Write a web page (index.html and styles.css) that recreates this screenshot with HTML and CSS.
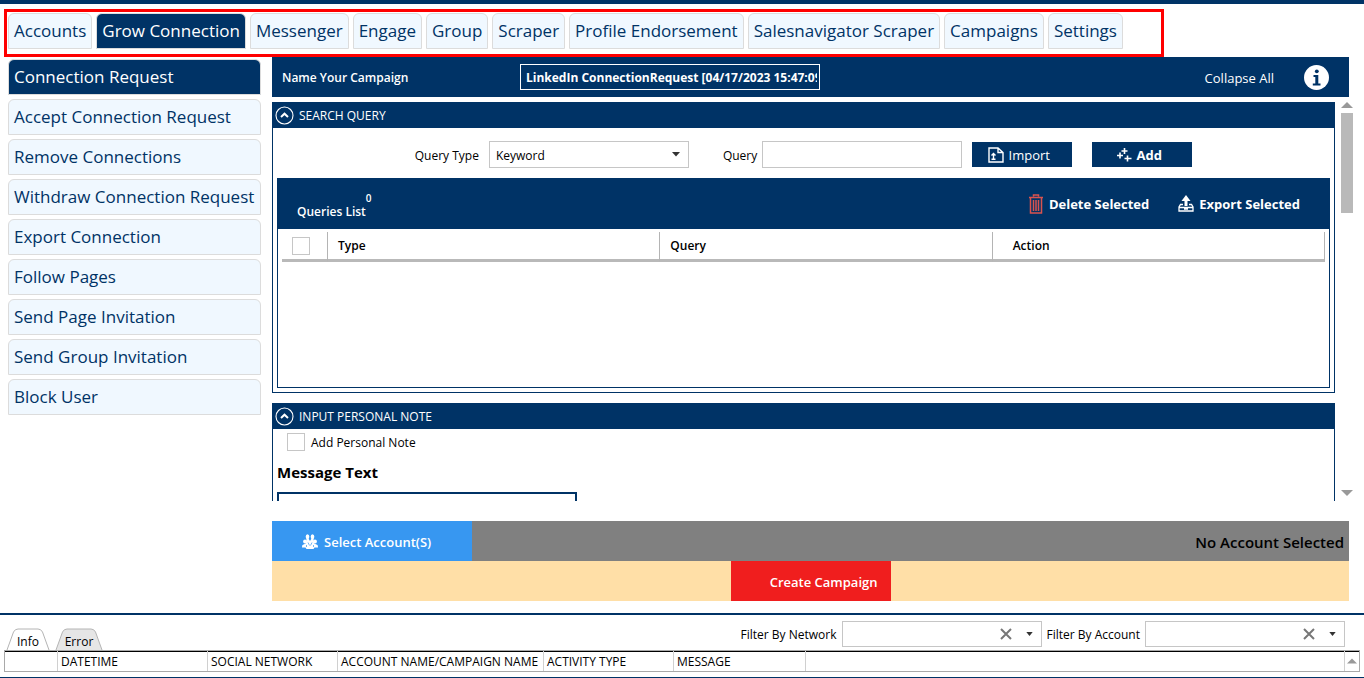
FILE: index.html
```html
<!DOCTYPE html>
<html lang="en">
<head>
<meta charset="utf-8">
<title>Grow Connection</title>
<link rel="stylesheet" href="styles.css">
</head>
<body>
<nav class="tabs" aria-label="Modules">
  <button class="tab">Accounts</button>
  <button class="tab active">Grow Connection</button>
  <button class="tab">Messenger</button>
  <button class="tab">Engage</button>
  <button class="tab">Group</button>
  <button class="tab">Scraper</button>
  <button class="tab">Profile Endorsement</button>
  <button class="tab">Salesnavigator Scraper</button>
  <button class="tab">Campaigns</button>
  <button class="tab">Settings</button>
</nav>

<div class="workspace">
  <nav class="side" aria-label="Grow Connection">
    <button class="tab active">Connection Request</button>
    <button class="tab">Accept Connection Request</button>
    <button class="tab">Remove Connections</button>
    <button class="tab">Withdraw Connection Request</button>
    <button class="tab">Export Connection</button>
    <button class="tab">Follow Pages</button>
    <button class="tab">Send Page Invitation</button>
    <button class="tab">Send Group Invitation</button>
    <button class="tab">Block User</button>
  </nav>

  <main class="main">
    <header class="campaign">
      <label class="campaign-label" for="campaign">Name Your Campaign</label>
      <input class="campaign-name" id="campaign" type="text" value="LinkedIn ConnectionRequest [04/17/2023 15:47:09]">
      <button class="plain collapse">Collapse All</button>
      <button class="plain info" aria-label="Information">
        <svg width="25" height="25" viewBox="0 0 25 25"><circle cx="12.500" cy="12.500" r="12.500" fill="#fff"/><circle cx="12.800" cy="6.300" r="1.900" fill="#003366"/><path d="M9.500 10h4.800v8.500h2.200v2H8.800v-2h2.500V12H9.500z" fill="#003366"/></svg>
      </button>
    </header>

    <div class="scroller">
      <div class="sections">
        <section class="section">
          <h2 class="section-head">
            <svg width="19" height="19" viewBox="0 0 19 19" fill="none" stroke="#fff"><circle cx="9.500" cy="9.500" r="8.500" stroke-width="1.100"/><path d="M6 11l3.500-3.300L13 11" stroke-width="2"/></svg>
            <span class="section-name">SEARCH QUERY</span>
          </h2>
          <div class="query-form">
            <label class="form-label" for="qtype">Query Type</label>
            <div class="pick type-pick">
              <select class="field" id="qtype"><option>Keyword</option></select>
              <svg class="arrow" width="8" height="5" viewBox="0 0 8 5"><path d="M0 0h8L4 4.500z" fill="#333"/></svg>
            </div>
            <label class="form-label" for="query">Query</label>
            <input class="field query-input" id="query" type="text">
            <button class="action">
              <svg width="16" height="16" viewBox="0 0 16 16" fill="none" stroke="#fff" stroke-width="1.400"><path d="M1 1h9l5 4.500V15H1zM10 1v4.500h5"/><path d="M5.500 12V6.500M3.500 8.500l2-2 2 2M3.500 12.300h4"/></svg>
              Import
            </button>
            <button class="action strong">
              <svg width="16" height="16" viewBox="0 0 16 16" fill="none" stroke="#fff" stroke-width="1.600"><path d="M8.500 1v6M5.500 4h6M4 5.500v6M1 8.500h6M11.500 8.500v6M8.500 11.500h7"/></svg>
              Add
            </button>
          </div>
          <div class="list">
            <div class="list-head">
              <h3 class="list-title">Queries List<span class="count">0</span></h3>
              <button class="plain list-action">
                <svg width="16" height="20" viewBox="0 0 16 20" fill="none" stroke="#d9534f" stroke-width="1.500"><path d="M1 3.500h14M5.500 2.500V1h5v1.500M2.500 4v15h11V4M5.500 6v11M8 6v11M10.500 6v11"/></svg>
                Delete Selected
              </button>
              <button class="plain list-action">
                <svg width="16" height="17" viewBox="0 0 16 17" fill="none" stroke="#fff" stroke-width="1.300"><path d="M5 9.500H2.500L1 12v4h14v-4l-1.500-2.500H11M1 12.500h14M6 14h4"/><path d="M3.500 6L8 0l4.500 6z" fill="#fff" stroke="none"/><path d="M6.500 5h3v6h-3z" fill="#fff" stroke="none"/></svg>
                Export Selected
              </button>
            </div>
            <table class="queries">
              <thead>
                <tr>
                  <th class="check-col"><input class="check" type="checkbox" aria-label="Select all queries"></th>
                  <th>Type</th>
                  <th>Query</th>
                  <th class="action-col">Action</th>
                </tr>
              </thead>
            </table>
          </div>
        </section>

        <section class="section">
          <h2 class="section-head">
            <svg width="19" height="19" viewBox="0 0 19 19" fill="none" stroke="#fff"><circle cx="9.500" cy="9.500" r="8.500" stroke-width="1.100"/><path d="M6 11l3.500-3.300L13 11" stroke-width="2"/></svg>
            <span class="section-name">INPUT PERSONAL NOTE</span>
          </h2>
          <div class="note">
            <div class="note-check"><input class="check" id="addnote" type="checkbox"><label class="form-label" for="addnote">Add Personal Note</label></div>
            <label class="note-title" for="message">Message Text</label>
            <textarea class="note-text" id="message"></textarea>
          </div>
        </section>
      </div>
      <div class="scrollbar" aria-hidden="true">
        <svg width="12" height="6" viewBox="0 0 12 6"><path d="M6 0l6 6H0z" fill="#999"/></svg>
        <div class="track"><div class="thumb"></div></div>
        <svg width="12" height="6" viewBox="0 0 12 6"><path d="M0 0h12L6 6z" fill="#999"/></svg>
      </div>
    </div>

    <div class="accounts">
      <button class="select-account">
        <svg width="16" height="16" viewBox="0 0 16 16" fill="#fff"><ellipse cx="5.500" cy="2.800" rx="1.800" ry="2.500"/><ellipse cx="10.500" cy="2.800" rx="1.800" ry="2.500"/><circle cx="3" cy="7.500" r="1.900"/><circle cx="13" cy="7.500" r="1.900"/><path d="M4.500 5h2.300L8 7l1.200-2h2.300l.7 4.500 3.300 1.500q.5.500.5 2.500h-3.500L11.500 15h-7l-1-1.500H0q0-2 .5-2.500l3.300-1.500z"/><path d="M6 8.500l1.500 3M10 8.500l-1.500 3M4.500 11v2M11.500 11v2" stroke="#3797f1" stroke-width=".7"/></svg>
        Select Account(S)
      </button>
      <span class="account-status">No Account Selected</span>
    </div>
    <div class="create-bar"><button class="create">Create Campaign</button></div>
  </main>
</div>

<footer class="log">
  <div class="log-bar">
    <div class="log-tabs">
      <button class="log-tab current">
        <svg class="log-shape" width="44" height="22" viewBox="0 0 44 22"><path d="M1 22L7.500 4Q9 1 12 1h20q3 0 4.500 3L43 22" fill="#fff" stroke="#b4b4b4"/></svg>
        <span class="log-name">Info</span>
      </button>
      <button class="log-tab">
        <svg class="log-shape" width="48" height="22" viewBox="0 0 48 22"><path d="M1 22L7.500 4Q9 1 12 1h24q3 0 4.500 3L47 22" fill="#e6e6e6" stroke="#b4b4b4"/></svg>
        <span class="log-name">Error</span>
      </button>
    </div>
    <div class="filters">
      <label class="form-label" for="fnet">Filter By Network</label>
      <div class="pick">
        <select class="field" id="fnet"><option></option></select>
        <button class="plain clear" aria-label="Clear network filter"><svg width="12" height="12" viewBox="0 0 12 12"><path d="M1 1l10 10M11 1L1 11" stroke="#777" stroke-width="2"/></svg></button>
        <svg class="arrow" width="7" height="4" viewBox="0 0 8 5"><path d="M0 0h8L4 5z" fill="#333"/></svg>
      </div>
      <label class="form-label" for="facc">Filter By Account</label>
      <div class="pick">
        <select class="field" id="facc"><option></option></select>
        <button class="plain clear" aria-label="Clear account filter"><svg width="12" height="12" viewBox="0 0 12 12"><path d="M1 1l10 10M11 1L1 11" stroke="#777" stroke-width="2"/></svg></button>
        <svg class="arrow" width="7" height="4" viewBox="0 0 8 5"><path d="M0 0h8L4 5z" fill="#333"/></svg>
      </div>
    </div>
  </div>
  <div class="log-frame">
    <table class="log-table">
      <thead>
        <tr>
          <th class="col-mark"></th>
          <th class="col-date">DATETIME</th>
          <th class="col-net">SOCIAL NETWORK</th>
          <th class="col-name">ACCOUNT NAME/CAMPAIGN NAME</th>
          <th class="col-net">ACTIVITY TYPE</th>
          <th class="col-msg">MESSAGE</th>
          <th></th>
        </tr>
      </thead>
    </table>
    <div class="log-scroll" aria-hidden="true"><svg width="10" height="6" viewBox="0 0 12 6"><path d="M6 0l6 6H0z" fill="#999"/></svg></div>
  </div>
</footer>
</body>
</html>
```

FILE: styles.css
```css
:root {
  --navy: #003366;
  --pale: #f0f8ff;
  --line: #c6c6c6;
}

* {
  box-sizing: border-box;
}

body {
  margin: 0;
  height: 100vh;
  display: flex;
  flex-direction: column;
  overflow: hidden;
  border-top: 4px solid var(--navy);
  border-bottom: 1px solid var(--navy);
  background: #fff;
  color: #000;
  font: 12px/16px "Open Sans", "Noto Sans", sans-serif;
}

button,
input,
select,
textarea {
  font: inherit;
  color: inherit;
  border-radius: 0;
  margin: 0;
}

svg {
  display: block;
  flex: none;
}

/* Module tabs */
.tabs {
  display: flex;
  gap: 4px;
  align-self: flex-start;
  margin: 5px 0 0 4px;
  padding: 1px 38px 5px 1px;
  border: 3px solid #f00;
}

.tab {
  height: 36px;
  padding: 0 5px;
  border: 1px solid #dcdcdc;
  border-radius: 6px 6px 0 0;
  background: var(--pale);
  color: var(--navy);
  font-size: 17px;
  line-height: 24px;
  text-align: left;
  white-space: nowrap;
}

.tab.active {
  background: var(--navy);
  color: #fff;
}

/* Workspace */
.workspace {
  flex: 1;
  min-height: 0;
  display: flex;
  gap: 11px;
  padding: 0 15px 12px 8px;
}

.side {
  width: 253px;
  flex: none;
  display: flex;
  flex-direction: column;
  gap: 4px;
  padding-top: 2px;
}

.main {
  flex: 1;
  min-width: 0;
  display: flex;
  flex-direction: column;
}

.plain {
  padding: 0;
  border: 0;
  background: none;
}

.campaign {
  height: 40px;
  flex: none;
  display: flex;
  align-items: center;
  padding: 0 20px 0 10px;
  background: var(--navy);
  color: #fff;
}

.campaign-label {
  width: 238px;
  padding-top: 2px;
  font-weight: 600;
}

.campaign-name {
  width: 300px;
  height: 26px;
  padding: 1px 2px 0 5px;
  border: 1px solid #fff;
  background: none;
  font-weight: 700;
}

.collapse {
  margin-left: auto;
  padding-top: 2px;
  font-size: 13px;
}

.info {
  margin-left: 30px;
}

/* Scrolling sections */
.scroller {
  flex: 1;
  min-height: 0;
  display: flex;
  gap: 6px;
  margin: 5px -4px 20px 0;
}

.sections {
  flex: 1;
  min-width: 0;
  overflow: hidden;
  display: flex;
  flex-direction: column;
  gap: 10px;
}

.section {
  flex: none;
  border: 1px solid var(--navy);
  border-top: 0;
}

.section-head {
  height: 26px;
  margin: 0;
  padding: 0 2px;
  display: flex;
  align-items: center;
  gap: 5px;
  background: var(--navy);
  color: #fff;
  font-size: 12px;
  font-weight: 400;
}

.section-name,
.form-label {
  padding-top: 2px;
}

.query-form {
  display: flex;
  align-items: center;
  justify-content: center;
  padding: 13px 0 10px;
}

.field {
  height: 27px;
  padding: 2px 6px 0;
  border: 1px solid var(--line);
  background: #fff;
  appearance: none;
}

.pick {
  position: relative;
  width: 200px;
}

.pick .field {
  display: block;
  width: 100%;
}

.arrow {
  position: absolute;
  top: 11px;
  right: 9px;
  pointer-events: none;
}

.type-pick {
  margin: 0 34px 0 10px;
}

.query-input {
  width: 200px;
  margin: 0 10px 0 5px;
}

.action {
  width: 100px;
  height: 25px;
  display: flex;
  align-items: center;
  justify-content: center;
  gap: 5px;
  padding: 0 7px 0 0;
  border: 0;
  background: var(--navy);
  color: #fff;
  font-size: 13px;
}

.action + .action {
  margin-left: 20px;
}

.strong {
  font-weight: 700;
}

.list {
  min-height: 210px;
  margin: 0 4px 4px;
  border: 1px solid var(--navy);
  border-top: 0;
}

.list-head {
  height: 51px;
  display: flex;
  align-items: center;
  gap: 29px;
  padding: 0 29px 0 19px;
  background: var(--navy);
  color: #fff;
}

.list-title {
  display: flex;
  margin: 16px auto 0 0;
  font-size: 12px;
  font-weight: 600;
}

.count {
  margin-top: -14px;
  font-size: 10px;
}

.list-action {
  display: flex;
  align-items: center;
  gap: 5px;
  font-size: 13px;
  font-weight: 700;
}

.queries {
  width: calc(100% - 8px);
  margin: 3px 4px 0;
  border-collapse: separate;
  border-spacing: 0;
  table-layout: fixed;
}

.queries th {
  height: 30px;
  padding: 0 10px;
  border-right: 1px solid #b4b4b4;
  border-bottom: 3px solid #b9b9b9;
  font-weight: 600;
  text-align: left;
}

.queries .check-col {
  width: 46px;
}

.queries .action-col {
  padding-left: 20px;
}

.check {
  appearance: none;
  display: block;
  width: 18px;
  height: 18px;
  border: 1px solid var(--line);
  background: #fff;
}

.note {
  display: flex;
  flex-direction: column;
  align-items: flex-start;
  padding: 4px 4px 10px;
}

.note-check {
  display: flex;
  align-items: center;
  gap: 6px;
  padding-left: 10px;
}

.note-title {
  margin: 11px 0 10px;
  font-size: 15px;
  line-height: 20px;
  font-weight: 700;
}

.note-text {
  width: 300px;
  height: 100px;
  border: 2px solid var(--navy);
  background: #fff;
  resize: none;
}

.scrollbar {
  width: 12px;
  display: flex;
  flex-direction: column;
  gap: 5px;
  padding-bottom: 5px;
}

.track {
  flex: 1;
}

.thumb {
  height: 100px;
  background: #b9b9b9;
}

/* Account and campaign bars */
.accounts {
  height: 40px;
  flex: none;
  display: flex;
  align-items: center;
  justify-content: space-between;
  padding-right: 5px;
  background: #808080;
}

.select-account {
  width: 200px;
  height: 40px;
  display: flex;
  align-items: center;
  gap: 6px;
  padding: 1px 0 0 30px;
  border: 0;
  background: #3797f1;
  color: #fff;
  font-size: 13px;
  font-weight: 600;
}

.account-status {
  padding-top: 2px;
  font-size: 15px;
  line-height: 20px;
  font-weight: 600;
}

.create-bar {
  flex: none;
  display: flex;
  justify-content: center;
  background: #ffdfa7;
}

.create {
  width: 160px;
  height: 40px;
  padding: 2px 13px 0 0;
  border: 0;
  background: #f01e1e;
  color: #fff;
  font-size: 13px;
  font-weight: 600;
  text-align: right;
}

/* Activity log */
.log {
  flex: none;
  padding: 0 4px 5px;
  border-top: 2px solid var(--navy);
}

.log-bar {
  display: flex;
  align-items: flex-end;
  justify-content: space-between;
  padding: 6px 15px 0 2px;
}

.log-tabs {
  display: flex;
  gap: 5px;
}

.log-tab {
  position: relative;
  padding: 0;
  border: 0;
  background: none;
}

.log-name {
  position: absolute;
  inset: 6px 0 0;
  text-align: center;
}

.filters {
  display: flex;
  align-items: center;
  gap: 5px;
  margin-bottom: 3px;
  font-weight: 500;
}

.filters .field {
  height: 26px;
}

.clear {
  position: absolute;
  top: 7px;
  right: 30px;
}

.log-frame {
  display: flex;
  border: 1px solid #a9a9a9;
  box-shadow: inset 0 1px #000;
}

.log-table {
  flex: 1;
  border-collapse: separate;
  border-spacing: 0;
  table-layout: fixed;
}

.log-table th {
  height: 20px;
  padding: 2px 3px 0;
  border-right: 1px solid #d0d0d0;
  font-weight: 500;
  text-align: left;
  white-space: nowrap;
}

.col-mark {
  width: 53px;
}

.col-date {
  width: 150px;
}

.col-net {
  width: 130px;
}

.col-name {
  width: 206px;
}

.col-msg {
  width: 132px;
}

.log-scroll {
  display: flex;
  align-items: center;
  padding: 0 2px;
}
```
